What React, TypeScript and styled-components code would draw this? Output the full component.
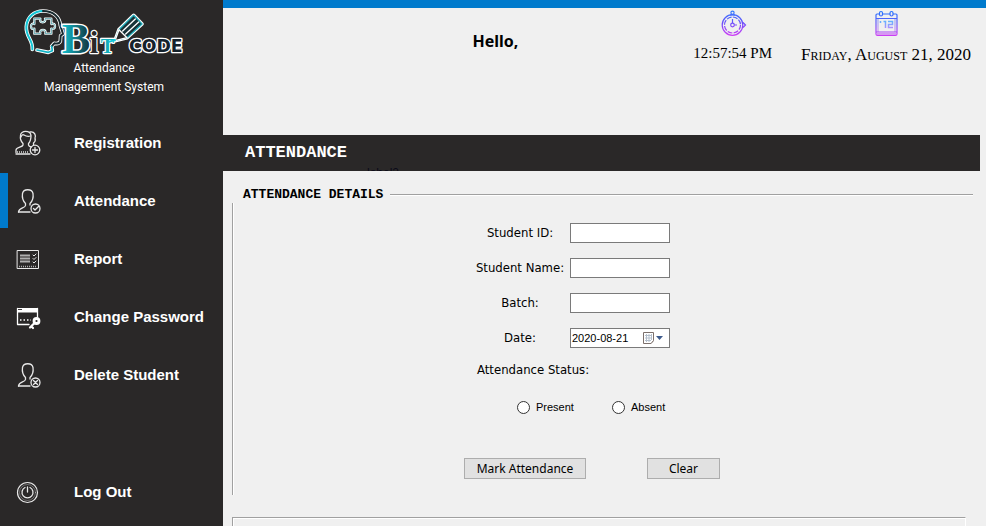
import React from "react";
import styled, { createGlobalStyle } from "styled-components";

const dark = "#2a2828";
const blue = "#007acc";
const face = "#f0f0f0";
const sans = `"Liberation Sans", Arial, sans-serif`;
const ui = `"Noto Sans", "Open Sans", sans-serif`;
const tahoma = `"DejaVu Sans Condensed", "DejaVu Sans", sans-serif`;
const mono = `"Liberation Mono", monospace`;
const serif = `"Liberation Serif", serif`;

const GlobalStyle = createGlobalStyle`
  * { box-sizing: border-box; }
  body { margin: 0; background: ${face}; color: #000; font-family: ${sans}; }
  h1, h2, p { margin: 0; }
`;

const Page = styled.div`
  display: grid;
  grid-template-columns: 223px 1fr;
  min-height: 100vh;
`;

const Sidebar = styled.aside`
  display: flex;
  flex-direction: column;
  padding-bottom: 7px;
  background: ${dark};
  color: #fff;
`;

const Brand = styled.div`
  display: flex;
  flex-direction: column;
  align-items: center;
  width: 208px;
  height: 115px;
  padding-top: 8px;
`;

const LogoArt = styled.svg`
  flex: none;
  width: 162px;
  height: 47px;
  overflow: visible;
  fill: none;
`;

const LogoText = styled.text`
  stroke: #fff;
  stroke-linejoin: round;
  paint-order: stroke;
  font-weight: bold;
`;

const BrandText = styled.p`
  margin-top: 4px;
  font: 12px/19px "Roboto", ${sans};
  text-align: center;
`;

const Nav = styled.nav`
  display: flex;
  flex: 1;
  flex-direction: column;
  gap: 3px;
`;

const NavLink = styled.a<{ $active?: boolean; $last?: boolean }>`
  display: flex;
  align-items: center;
  gap: 33px;
  height: 55px;
  margin-top: ${(p) => (p.$last ? "auto" : "0")};
  padding-left: 7px;
  border-left: 8px solid ${(p) => (p.$active ? blue : "transparent")};
  color: #fff;
  font: bold 15px/20px ${sans};
  text-decoration: none;
`;

const Glyph = styled.svg`
  flex: none;
  width: 26px;
  height: 26px;
  fill: none;
  stroke: #e8e8e8;
  stroke-width: 1.3;
  stroke-linecap: round;
  stroke-linejoin: round;
`;

const Main = styled.main`
  display: flex;
  flex-direction: column;
  border-top: 8px solid ${blue};
`;

const Header = styled.header`
  display: flex;
  align-items: flex-start;
  gap: 29px;
  height: 127px;
  padding: 2px 15px 0 4px;
`;

const Hello = styled.p`
  margin: 20px auto 0 33%;
  font: bold 16px/22px ${ui};
`;

const Stamp = styled.div<{ $calendar?: boolean }>`
  display: flex;
  flex-direction: column;
  align-items: center;
  gap: ${(p) => (p.$calendar ? "7px" : "5px")};
  font: ${(p) => (p.$calendar ? "17px" : "15px")}/20px ${serif};
  font-variant: ${(p) => (p.$calendar ? "small-caps" : "normal")};
  white-space: nowrap;
`;

const StampIcon = styled.svg`
  width: 28px;
  height: 28px;
  fill: none;
`;

const TitleBar = styled.div`
  position: relative;
  display: flex;
  align-items: center;
  height: 36px;
  margin-right: 6px;
  padding-left: 22px;
  overflow: hidden;
  background: ${dark};
  color: #fff;
`;

const Title = styled.h1`
  font: bold 17px/20px ${mono};
  text-transform: uppercase;
`;

const HiddenLabel = styled.span`
  position: absolute;
  bottom: -9px;
  left: 144px;
  color: #0a0a18;
  font: 12px/14px ${sans};
`;

const Group = styled.section`
  margin: 16px 13px 22px 9px;
`;

const GroupHead = styled.div`
  display: flex;
  align-items: center;
  gap: 7px;
  height: 16px;
  padding-left: 11px;
`;

const GroupTitle = styled.h2`
  font: bold 13px/16px ${mono};
  text-transform: uppercase;
`;

const Rule = styled.div`
  flex: 1;
  height: 2px;
  border-top: 1px solid #a0a0a0;
  border-bottom: 1px solid #fff;
`;

const GroupBody = styled.div`
  padding: 20px 22px 16px 0;
  border-left: 1px solid #a0a0a0;
  box-shadow: inset 1px 0 #fff;
`;

const NextGroup = styled.section`
  flex: 1;
  margin: 0 20px 0 9px;
  border: 1px solid #a0a0a0;
  border-right-color: #fff;
  border-bottom: 0;
  box-shadow: inset 1px 1px #fff;
`;

const Form = styled.form`
  width: 256px;
  margin: 0 auto;
`;

const Fields = styled.div`
  display: grid;
  grid-template-columns: 100px 100px;
  row-gap: 15px;
  align-items: center;
  padding-left: 6px;
`;

const Label = styled.label`
  font: 13px/20px ${tahoma};
  text-align: center;
  white-space: nowrap;
`;

const TextBox = styled.input`
  width: 100px;
  height: 20px;
  padding: 0 2px;
  border: 1px solid #7a7a7a;
  border-radius: 0;
  background: #fff;
  font: 12px/18px ${sans};
`;

const DateBox = styled.div`
  display: flex;
  width: 100px;
  height: 20px;
  border: 1px solid #7a7a7a;
  background: #fff;
`;

const DateInput = styled.input`
  width: 70px;
  padding: 0 1px;
  border: 0;
  background: transparent;
  font: 11px/18px ${sans};
`;

const DateButton = styled.button`
  display: flex;
  align-items: center;
  width: 28px;
  padding: 0;
  border: 0;
  background: transparent;
`;

const StatusLabel = styled.div`
  margin: 12px 0 0 13px;
  font: 13px/20px ${tahoma};
`;

const Choices = styled.div`
  display: grid;
  grid-template-columns: 95px 95px;
  margin: 17px 0 0 53px;
`;

const Choice = styled.label`
  display: flex;
  align-items: center;
  gap: 6px;
  font: 11px/20px ${sans};
`;

const Radio = styled.input`
  appearance: none;
  width: 13px;
  height: 13px;
  margin: 0;
  border: 1px solid #333;
  border-radius: 50%;
  background: #fff;

  &:checked {
    background: radial-gradient(#333 0 3px, #fff 4px);
  }
`;

const Actions = styled.div`
  display: flex;
  justify-content: space-between;
  margin-top: 41px;
`;

const Button = styled.button<{ $wide?: boolean }>`
  width: ${(p) => (p.$wide ? "122px" : "73px")};
  height: 21px;
  padding: 0;
  border: 1px solid #adadad;
  background: #e1e1e1;
  color: #000;
  font: 12px/19px ${ui};
`;

function Logo() {
  return (
    <LogoArt viewBox="70 22 486 141" role="img" aria-label="Bit Code">
      <defs>
        <linearGradient id="teal" x1="0" x2="1">
          <stop offset="0" stopColor="#12c6d6" />
          <stop offset="1" stopColor="#123038" />
        </linearGradient>
      </defs>
      <g strokeLinecap="round" strokeLinejoin="round">
        <path d="M98 146 C100 116 78 110 80 78 C82 48 104 31 130 31 C160 31 180 48 182 74 L190 100 L183 105 L182 122 Q178 131 164 128 L156 137 L158 150 L146 155 L112 148" stroke="#fff" strokeWidth="11" />
        <path d="M98 146 C100 116 78 110 80 78 C82 48 104 31 130 31" stroke="#12c6d6" strokeWidth="6" />
        <path d="M130 31 C160 31 180 48 182 74 L190 100 L183 105 L182 122 Q178 131 164 128 L156 137" stroke="#17292e" strokeWidth="6" />
        <path d="M156 137 L158 150 L146 155 L112 148" stroke="#12b4c6" strokeWidth="5" />
        <path d="M104 54 H122 Q119 64 129 65 Q139 64 136 54 H155 V70 Q166 67 166 77 Q166 87 155 84 V99 H137 Q140 88 130 88 Q119 88 122 99 H104 V84 Q94 87 94 77 Q94 67 104 70 Z" stroke="#fff" strokeWidth="7" />
        <path d="M104 54 H122 Q119 64 129 65 Q139 64 136 54 H155 V70 Q166 67 166 77 Q166 87 155 84 V99 H137 Q140 88 130 88 Q119 88 122 99 H104 V84 Q94 87 94 77 Q94 67 104 70 Z" stroke="#1a7f8b" strokeWidth="2" />
      </g>
      <LogoText x="186" y="156" fontFamily={serif} fontSize="128" fill="url(#teal)" strokeWidth="9">B</LogoText>
      <LogoText x="270" y="156" fontFamily={serif} fontSize="92" fill={dark} strokeWidth="7">i</LogoText>
      <g strokeLinejoin="round" strokeLinecap="round">
        <path d="M328 124 L346 120 L358 87 L402 44 L427 70 L382 111 L346 120" stroke="#fff" strokeWidth="11" />
        <path d="M346 120 L358 87 L402 44 L427 70 L382 111 Z" fill="#173238" stroke="#1aa6b4" strokeWidth="4" />
        <path d="M346 120 L358 87 L382 111 Z" fill={dark} stroke="#fff" strokeWidth="4" />
        <path d="M369 91 L407 55 M378 100 L417 64" stroke="#fff" strokeWidth="4" />
      </g>
      <LogoText x="303" y="156" fontFamily={serif} fontSize="60" fill="#12aebb" strokeWidth="7">T</LogoText>
      <path d="M330 123 L346 118" stroke="#12c6d6" strokeWidth="6" strokeLinecap="round" />
      <LogoText x="388" y="153" fontFamily="DejaVu Sans, sans-serif" fontSize="52" fill="#14222c" strokeWidth="8">CODE</LogoText>
    </LogoArt>
  );
}

const person =
  "M3.500 24 C4 19.500 10 20.500 10.500 17.500 V15.500 C7.500 12.500 7 9 7.500 5.500 C8.500 0.500 17 0.500 18 5.500 C18.500 9 18 12.500 15 15.500 V17";

const icons: Record<string, React.ReactNode> = {
  registration: (
    <Glyph viewBox="0 0 26 26" aria-hidden="true">
      <path d="M1 22.500 V20 C1.500 17 7.500 17.500 8 15 V13.500 C5.500 11 5 8.500 5.500 5.500 C5.500 0 15.500 0 16 5.500 C16 9 15.500 11.500 13.500 13.500 V15 Q14 16.500 16 17 M1 24 H15" />
      <path d="M6 7 Q7 4 9 5 Q12 7 15.500 6 M15 2 C20 1 21 6 20 8 Q21 11 18.500 13 V14.500" />
      <path d="M2 22 H14" strokeWidth="2" strokeDasharray="1 1" strokeLinecap="butt" opacity="0.7" />
      <circle cx="20" cy="20" r="4.800" />
      <path d="M17.500 20 H22.500 M20 17.500 V22.500" />
    </Glyph>
  ),
  attendance: (
    <Glyph viewBox="0 0 26 26" aria-hidden="true">
      <path d={person} />
      <path d="M3.500 24 H15" />
      <circle cx="20.500" cy="20.500" r="4.500" />
      <path d="M18.500 20.500 L20 22 L23.500 18.500" />
    </Glyph>
  ),
  report: (
    <Glyph viewBox="0 0 26 26" aria-hidden="true">
      <path d="M2.500 4.500 H23.500 V22.500 H2.500 Z" strokeWidth="1" />
      <path d="M5 9.500 H15 M5 12.500 H15 M5 15.500 H15" strokeWidth="2" strokeLinecap="butt" opacity="0.7" />
      <path d="M18 9 L19 10 L21 8 M18 12.500 L19 13.500 L21 11.500 M18 16 L19 17 L21 15" strokeWidth="1" />
      <path d="M4 20.500 H22" strokeDasharray="1 1" strokeLinecap="butt" strokeWidth="1.500" opacity="0.7" />
    </Glyph>
  ),
  password: (
    <Glyph viewBox="0 0 26 26" aria-hidden="true">
      <path d="M2.500 4.500 V20.500 H14 M22.500 4.500 V13" stroke="#fff" />
      <path d="M2 4 H23 V8.500 H2 Z" fill="#fff" stroke="none" />
      <path d="M3.500 5.500 H7" stroke={dark} strokeWidth="1" strokeDasharray="1 1" />
      <path d="M5 16 H16" stroke="#fff" strokeWidth="1.500" strokeDasharray="1.500 2" strokeLinecap="butt" />
      <circle cx="21.500" cy="17" r="2.500" stroke="#fff" strokeWidth="2.800" />
      <path d="M19.500 19 L15 23.500 M16.500 22.500 L18 24" stroke="#fff" strokeWidth="2.200" />
    </Glyph>
  ),
  remove: (
    <Glyph viewBox="0 0 26 26" aria-hidden="true">
      <path d={person} />
      <path d="M3.500 24 H15" />
      <circle cx="20.500" cy="20.500" r="4.500" />
      <path d="M18.500 18.500 L22.500 22.500 M22.500 18.500 L18.500 22.500" />
    </Glyph>
  ),
  logout: (
    <Glyph viewBox="0 0 26 26" aria-hidden="true">
      <circle cx="12.500" cy="13.500" r="10" strokeWidth="1.200" />
      <path d="M10 8.500 A5.500 5.500 0 1 0 15 8.500 M12.500 8 V13" strokeWidth="1.300" />
      <circle cx="12.500" cy="13.500" r="8" strokeWidth="0.600" opacity="0.600" />
    </Glyph>
  ),
};

function Stopwatch() {
  return (
    <StampIcon viewBox="0 0 28 28" aria-hidden="true">
      <defs>
        <linearGradient id="watch" gradientUnits="userSpaceOnUse" x1="0" x2="0" y1="1" y2="26">
          <stop offset="0" stopColor="#2f7cff" />
          <stop offset="0.500" stopColor="#6f4dfa" />
          <stop offset="1" stopColor="#d23cf5" />
        </linearGradient>
      </defs>
      <g stroke="url(#watch)" strokeWidth="1.200">
        <circle cx="13.500" cy="15" r="10.300" />
        <circle cx="13.500" cy="15" r="8" strokeDasharray="5 1.300" />
        <circle cx="13.500" cy="2.800" r="1.600" />
        <circle cx="13.500" cy="15" r="1.800" />
        <path d="M13.500 9 V13 M15.500 15 H18 M11 5 H16 M24 12.500 L26.500 15 L24 17.500" />
      </g>
    </StampIcon>
  );
}

function CalendarArt() {
  return (
    <StampIcon viewBox="0 0 28 28" aria-hidden="true">
      <defs>
        <linearGradient id="cal" gradientUnits="userSpaceOnUse" x1="0" x2="0" y1="1" y2="26">
          <stop offset="0" stopColor="#1f74ff" />
          <stop offset="0.500" stopColor="#6a5cf8" />
          <stop offset="1" stopColor="#cf3df5" />
        </linearGradient>
        <linearGradient id="digits" gradientUnits="userSpaceOnUse" x1="0" x2="0" y1="10" y2="19">
          <stop offset="0" stopColor="#56b8ff" />
          <stop offset="1" stopColor="#b98cff" />
        </linearGradient>
      </defs>
      <g stroke="url(#cal)" strokeWidth="1.200">
        <path d="M7.500 4 H5 Q4 4 4 5 V24 Q4 25.500 5.500 25.500 H23.500 Q25 25.500 25 24 V5 Q25 4 24 4 H21 M10.500 4 H18 M4 8.500 H25 M4 22 H25 M5 24 H24" />
        <path d="M6 9 V22 M23 9 V22" opacity="0.500" />
        <rect x="7.500" y="1.500" width="3" height="4.500" rx="1.500" />
        <rect x="18" y="1.500" width="3" height="4.500" rx="1.500" />
      </g>
      <path d="M8.500 11 V13 M11.500 11.500 H13.500 V18 M16 11.500 H20.500 V14.500 H16.500 V17.500 H21" stroke="url(#digits)" strokeWidth="1.500" />
    </StampIcon>
  );
}

export default function App() {
  return (
    <>
      <GlobalStyle />
      <Page>
        <Sidebar>
          <Brand>
            <Logo />
            <BrandText>
              Attendance
              <br />
              Managemnent System
            </BrandText>
          </Brand>
          <Nav>
            <NavLink href="#registration">{icons.registration}Registration</NavLink>
            <NavLink href="#attendance" $active aria-current="page">{icons.attendance}Attendance</NavLink>
            <NavLink href="#report">{icons.report}Report</NavLink>
            <NavLink href="#password">{icons.password}Change Password</NavLink>
            <NavLink href="#delete">{icons.remove}Delete Student</NavLink>
            <NavLink href="#logout" $last>{icons.logout}Log Out</NavLink>
          </Nav>
        </Sidebar>
        <Main>
          <Header>
            <Hello>Hello,</Hello>
            <Stamp>
              <Stopwatch />
              12:57:54 PM
            </Stamp>
            <Stamp $calendar>
              <CalendarArt />
              Friday, August 21, 2020
            </Stamp>
          </Header>
          <TitleBar>
            <Title>Attendance</Title>
            <HiddenLabel>label2</HiddenLabel>
          </TitleBar>
          <Group>
            <GroupHead>
              <GroupTitle>Attendance Details</GroupTitle>
              <Rule />
            </GroupHead>
            <GroupBody>
              <Form onSubmit={(e) => e.preventDefault()}>
                <Fields>
                  <Label htmlFor="sid">Student ID:</Label>
                  <TextBox id="sid" />
                  <Label htmlFor="sname">Student Name:</Label>
                  <TextBox id="sname" />
                  <Label htmlFor="batch">Batch:</Label>
                  <TextBox id="batch" />
                  <Label htmlFor="date">Date:</Label>
                  <DateBox>
                    <DateInput id="date" defaultValue="2020-08-21" />
                    <DateButton type="button" aria-label="Open calendar">
                      <svg width="24" height="14" viewBox="0 0 24 14" aria-hidden="true">
                        <path d="M3 3 H13 V10 L10 13 H3 Z" fill="#b9b3b0" />
                        <path d="M2.500 1.500 H12.500 V9.500 L10 12.500 H2.500 Z" fill="#fff" stroke="#7c706c" />
                        <path d="M4 4.500 H11 M4 7 H11 M4 9.500 H10 M5.500 3 V11 M8 3 V11 M10.500 3 V9" stroke="#b4bfcc" />
                        <path d="M15 5 H22 L18.500 9 Z" fill="#3d5a8c" />
                      </svg>
                    </DateButton>
                  </DateBox>
                </Fields>
                <StatusLabel id="status">Attendance Status:</StatusLabel>
                <Choices role="radiogroup" aria-labelledby="status">
                  <Choice>
                    <Radio type="radio" name="status" value="present" />
                    Present
                  </Choice>
                  <Choice>
                    <Radio type="radio" name="status" value="absent" />
                    Absent
                  </Choice>
                </Choices>
                <Actions>
                  <Button type="submit" $wide>Mark Attendance</Button>
                  <Button type="reset">Clear</Button>
                </Actions>
              </Form>
            </GroupBody>
          </Group>
          <NextGroup />
        </Main>
      </Page>
    </>
  );
}
